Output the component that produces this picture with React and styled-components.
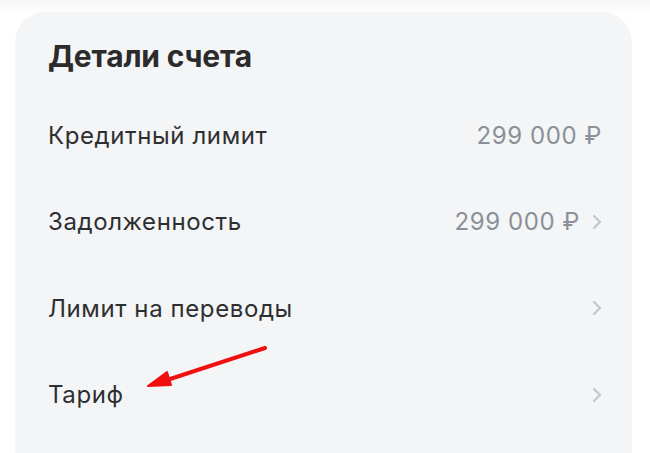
import React from 'react';
import styled, { createGlobalStyle } from 'styled-components';

const GlobalStyle = createGlobalStyle`
  html, body {
    margin: 0;
    padding: 0;
    background: #ffffff;
    font-family: Inter, Roboto, "Noto Sans", sans-serif;
    -webkit-font-smoothing: antialiased;
  }
`;

const Page = styled.div`
  width: 650px;
  height: 453px;
  overflow: hidden;
  padding: 12px 18px 0 15px;
  box-sizing: border-box;
  background: linear-gradient(#f6f6f6 0, #ffffff 14px);
`;

const Card = styled.div`
  position: relative;
  background: #f4f5f7;
  border-radius: 30px;
  padding: 24px 30px 40px 33px;
  height: 480px;
  box-sizing: border-box;
`;

const Title = styled.h2`
  margin: 0 0 16px;
  font-size: 30px;
  line-height: 40px;
  font-weight: 700;
  color: #2b2b2b;
  letter-spacing: -0.2px;
`;

const Row = styled.div`
  display: flex;
  align-items: center;
  justify-content: space-between;
  height: 86.5px;
`;

const Label = styled.span`
  font-size: 24px;
  letter-spacing: 0.6px;
  color: #2e2f31;
`;

const Right = styled.div`
  display: flex;
  align-items: center;
  gap: 12px;
`;

const Value = styled.span`
  font-size: 24px;
  letter-spacing: 0.6px;
  color: #8b9098;
`;

const Chevron = () => (
  <svg width="10" height="16" viewBox="0 0 10 16" fill="none">
    <path d="M2 2l6 6-6 6" stroke="#c3c6cb" strokeWidth="2.2" strokeLinecap="round" strokeLinejoin="round" />
  </svg>
);

const Arrow = styled.svg`
  position: absolute;
  left: 0;
  top: 0;
  pointer-events: none;
`;

const rows = [
  { label: 'Кредитный лимит', value: '299 000 ₽', chevron: false },
  { label: 'Задолженность', value: '299 000 ₽', chevron: true },
  { label: 'Лимит на переводы', chevron: true },
  { label: 'Тариф', chevron: true },
];

export default function App() {
  return (
    <>
      <GlobalStyle />
      <Page>
        <Card>
          <Title>Детали счета</Title>
          {rows.map((r) => (
            <Row key={r.label}>
              <Label>{r.label}</Label>
              <Right>
                {r.value && <Value>{r.value}</Value>}
                {r.chevron && <Chevron />}
              </Right>
            </Row>
          ))}
          <Arrow width="617" height="441" viewBox="0 0 617 441">
            <path d="M250 336 L146 370" stroke="#f01010" strokeWidth="4" strokeLinecap="round" />
            <path d="M133 374 L152 360 L156 373 Z" fill="#f01010" stroke="#f01010" strokeWidth="2" strokeLinejoin="round" />
          </Arrow>
        </Card>
      </Page>
    </>
  );
}
